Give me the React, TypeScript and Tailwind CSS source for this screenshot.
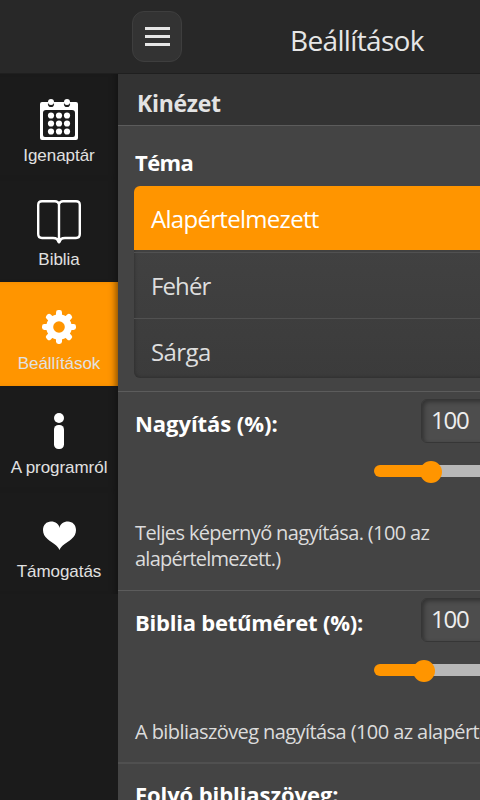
import type { ReactNode } from "react";

interface NavEntry {
  label: string;
  icon: ReactNode;
  active?: boolean;
}

function CalendarIcon() {
  return (
    <svg className="mt-[2px]" width="38" height="42" viewBox="0 0 38 42" fill="none">
      <path
        fill="#fff"
        fillRule="evenodd"
        d="M2 3H36Q38 3 38 5V39Q38 41 36 41H2Q0 41 0 39V5Q0 3 2 3ZM6 11Q3 11 3 14V36Q3 38 5 38H33Q35 38 35 36V14Q35 11 32 11Z"
      />
      <circle cx="11" cy="5" r="3.1" fill="#1b1b1b" />
      <circle cx="27" cy="5" r="3.1" fill="#1b1b1b" />
      <circle cx="11" cy="3" r="3" fill="#fff" />
      <circle cx="27" cy="3" r="3" fill="#fff" />
      {[16.5, 24.5, 32.5].map((cy) =>
        [11, 19, 27].map((cx) => (
          <circle key={`${cx}-${cy}`} cx={cx} cy={cy} r="3.1" fill="#fff" />
        ))
      )}
    </svg>
  );
}

function BookIcon() {
  return (
    <svg className="mb-[2px]" width="44" height="44" viewBox="0 0 44 44" fill="none">
      <path
        d="M22 4Q21 1.200 18 1.200H5Q1.200 1.200 1.200 5V34Q1.200 38 5 38H16Q21 38 22 42Q23 38 28 38H39Q42.800 38 42.800 34V5Q42.800 1.200 39 1.200H26Q23 1.200 22 4V41"
        stroke="#fff"
        strokeWidth="2.4"
        strokeLinejoin="round"
      />
      <path d="M18.500 38.500H25.500L23.500 42.500Q22 44.500 20.500 42.500Z" fill="#fff" />
    </svg>
  );
}

function GearIcon() {
  return (
    <svg width="34" height="34" viewBox="-17 -17 34 34" fill="#fff">
      {[0, 45, 90, 135].map((angle) => (
        <rect
          key={angle}
          x="-3"
          y="-17"
          width="6"
          height="34"
          rx="2.4"
          transform={`rotate(${angle})`}
        />
      ))}
      <circle r="12.8" />
      <circle r="5.8" fill="#ff9500" />
    </svg>
  );
}

function InfoIcon() {
  return (
    <svg width="10" height="36" viewBox="0 0 10 36" fill="#fff">
      <circle cx="5" cy="5" r="5" />
      <rect y="12" width="10" height="24" rx="4.5" />
    </svg>
  );
}

function HeartIcon() {
  return (
    <svg width="33" height="29" viewBox="0 0 33 29" fill="#fff">
      <path d="M16.5 29C15 24.5 9 22 4.5 18C1.5 15.5 0 12.5 0 9C0 4 3.5 .5 8 .5C12.5 .5 16 3 16.5 7C17 3 20.500 .5 25 .5C29.500 .5 33 4 33 9C33 12.500 31.500 15.500 28.500 18C24 22 18 24.500 16.500 29Z" />
    </svg>
  );
}

const navEntries: NavEntry[] = [
  { label: "Igenaptár", icon: <CalendarIcon /> },
  { label: "Biblia", icon: <BookIcon /> },
  { label: "Beállítások", icon: <GearIcon />, active: true },
  { label: "A programról", icon: <InfoIcon /> },
  { label: "Támogatás", icon: <HeartIcon /> },
];

function Sidebar() {
  return (
    <aside className="w-[118px] shrink-0 bg-[#1b1b1b] font-['Liberation_Sans',sans-serif]">
      <div className="h-[74px] border-b border-[#1f1f1f] bg-[#282828]" />
      <nav>
        {navEntries.map((entry) => (
          <a
            key={entry.label}
            className={`flex h-[104px] flex-col items-center ${
              entry.active
                ? "bg-[#ff9500] shadow-[inset_-7px_0_7px_-5px_rgba(0,0,0,0.5)]"
                : "shadow-[inset_-7px_0_7px_-5px_rgba(0,0,0,0.3)]"
            }`}
          >
            <span className="flex h-[46px] w-full items-center justify-center mt-[22px]">
              {entry.icon}
            </span>
            <span className="mt-1 text-[17px] leading-5 tracking-[-0.05px] whitespace-nowrap text-[#e1e1e1]">
              {entry.label}
            </span>
          </a>
        ))}
      </nav>
    </aside>
  );
}

interface SliderSettingProps {
  title: string;
  titleClass: string;
  fillClass: string;
  children: ReactNode;
}

function SliderSetting({ title, titleClass, fillClass, children }: SliderSettingProps) {
  return (
    <section className="border-t border-[#5c5c5c] pr-4 pl-[17px]">
      <div className="flex h-[52px] items-start justify-between pt-[7px]">
        <h3 className={`pt-2 text-[22px] leading-8 font-bold whitespace-nowrap text-white ${titleClass}`}>
          {title}
        </h3>
        <div className="mr-[61px] h-11 w-[100px] rounded-md border border-[#363636] bg-[#4d4d4d] pl-[9px] text-[24px] leading-10 tracking-[-1.2px] text-[#eee] shadow-[inset_2px_2px_4px_rgba(0,0,0,0.35)]">
          100
        </div>
      </div>
      <div className="ml-[239px] flex h-[54px] items-center">
        <div className={`h-3 rounded-l-full bg-[#ff9500] ${fillClass}`} />
        <div className="z-10 mt-[2px] -ml-[11px] size-[22px] rounded-full bg-[#ff9500]" />
        <div className="-ml-[11px] h-3 flex-1 rounded-r-full bg-[#b8b8b8]" />
      </div>
      <div className="pt-[22px] text-[20px] leading-[26px] whitespace-nowrap text-[#dcdcdc]">
        {children}
      </div>
    </section>
  );
}

export default function App() {
  return (
    <div className="flex h-[800px] w-[480px] overflow-hidden bg-[#444]">
      <Sidebar />
      <main className="w-[480px] shrink-0 font-['Open_Sans','Noto_Sans',sans-serif]">
        <header className="flex h-[74px] items-center border-b border-[#1f1f1f] bg-[#282828] pl-[14px]">
          <button className="flex h-[51px] w-[50px] flex-col items-center justify-center gap-[5px] rounded-xl border border-[#3e3e3e] bg-[#333]">
            <span className="h-[3px] w-[25px] bg-[#e6e6e6]" />
            <span className="h-[3px] w-[25px] bg-[#e6e6e6]" />
            <span className="h-[3px] w-[25px] bg-[#e6e6e6]" />
          </button>
          <h1 className="ml-[108px] pt-[7px] text-[28px] leading-9 tracking-[-0.65px] text-[#e6e6e6]">
            Beállítások
          </h1>
        </header>

        <div className="h-[52px] border-b border-[#5c5c5c] bg-[#333] pt-[13px] pl-[19px]">
          <h2 className="text-[23px] leading-8 font-bold tracking-[-0.3px] text-[#e3e3e3]">
            Kinézet
          </h2>
        </div>

        <section className="h-[265px] px-4 pt-5">
          <h3 className="pl-px text-[22px] leading-8 font-bold tracking-[-0.6px] text-white">
            Téma
          </h3>
          <ul className="mt-2 h-48 overflow-hidden rounded-md bg-linear-to-b from-[#444] to-[#3b3b3b] text-[24px] leading-[66px] text-[#dedede] shadow-[inset_1px_-1px_3px_rgba(0,0,0,0.2)]">
            <li className="h-16 bg-[#ff9500] pl-[17px] tracking-[-0.7px] text-white">
              Alapértelmezett
            </li>
            <li className="mt-[2px] h-[66px] border-t border-[#515151] pl-[17px] tracking-[-0.9px]">
              Fehér
            </li>
            <li className="h-[66px] border-t border-[#515151] pl-[17px] tracking-[-0.6px]">
              Sárga
            </li>
          </ul>
        </section>

        <SliderSetting
          title="Nagyítás (%):"
          titleClass="tracking-[-0.05px]"
          fillClass="w-[57px]"
        >
          <p className="tracking-[-0.63px]">Teljes képernyő nagyítása. (100 az</p>
          <p className="mb-[18px] tracking-[-0.75px]">alapértelmezett.)</p>
        </SliderSetting>
        <SliderSetting
          title="Biblia betűméret (%):"
          titleClass="tracking-[-0.22px]"
          fillClass="w-[50px]"
        >
          <p className="mb-[17px] tracking-[-0.58px]">
            A bibliaszöveg nagyítása (100 az alapértelmezett.)
          </p>
        </SliderSetting>
        <section className="border-t-2 border-[#505050] pt-[14px] pl-[17px]">
          <h3 className="text-[22px] leading-8 font-bold tracking-[-0.08px] text-white">
            Folyó bibliaszöveg:
          </h3>
        </section>
      </main>
    </div>
  );
}
